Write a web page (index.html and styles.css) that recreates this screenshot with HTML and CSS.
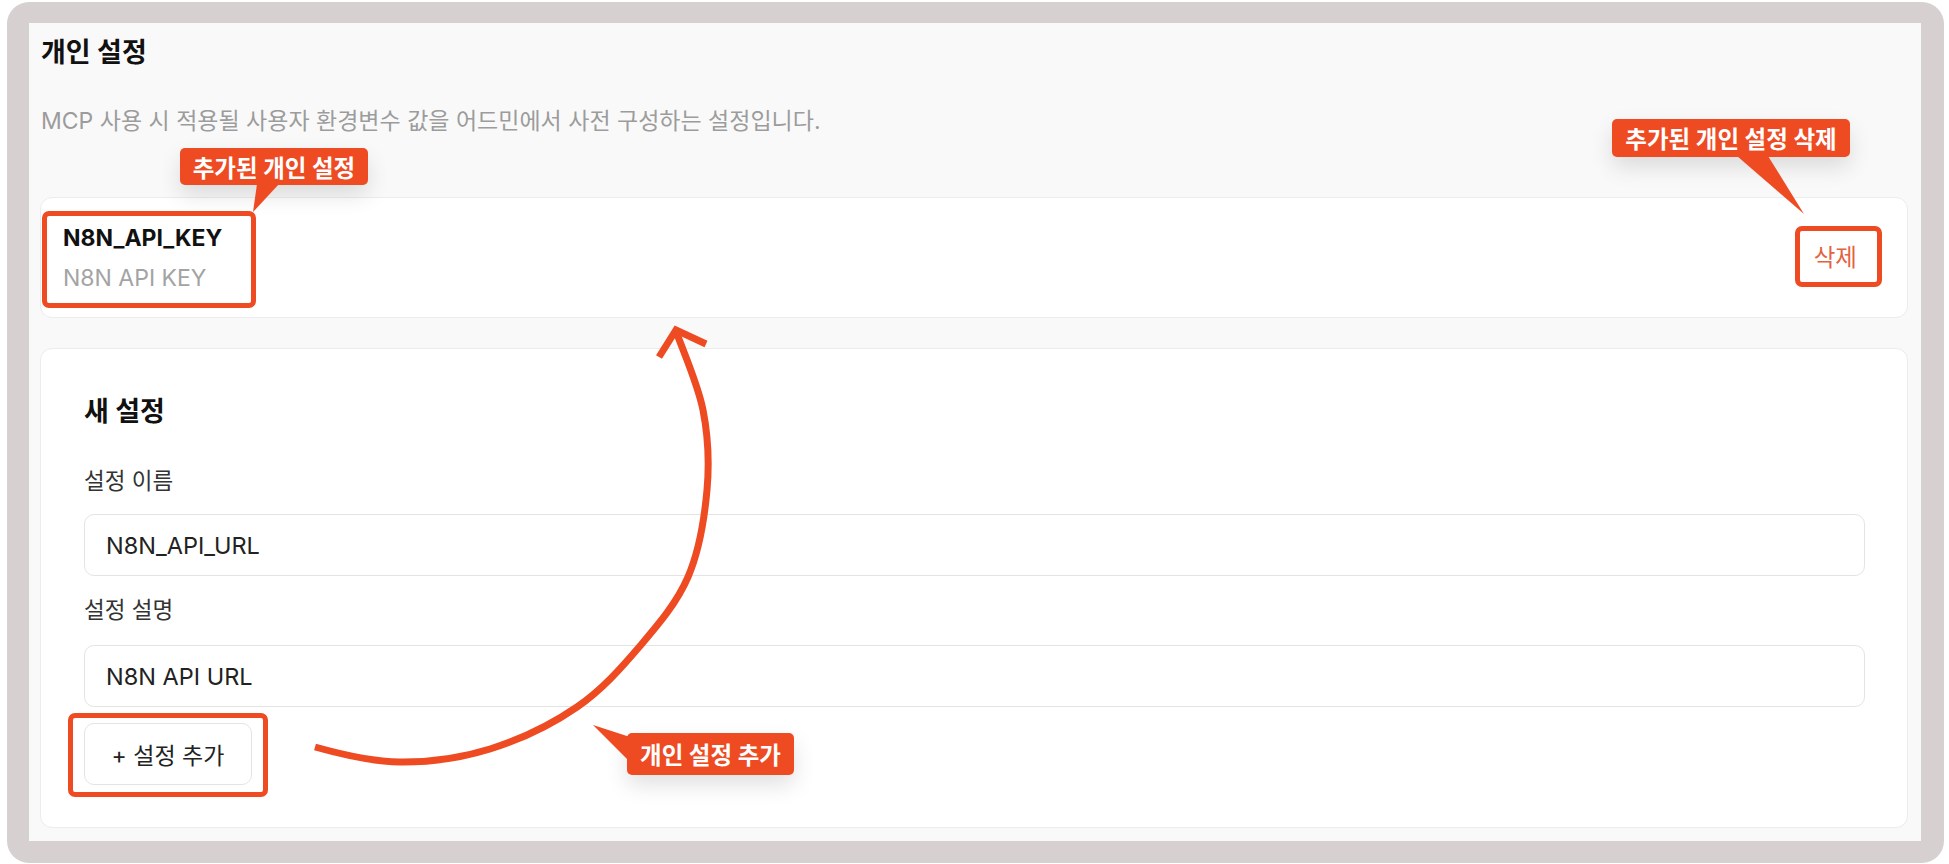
FILE: index.html
```html
<!DOCTYPE html>
<html lang="ko">
<head>
<meta charset="utf-8">
<title>개인 설정</title>
<link rel="stylesheet" href="styles.css">
</head>
<body>
<div class="frame">
  <section class="panel">
    <h2 class="panel-title">개인 설정</h2>
    <p class="panel-desc">MCP 사용 시 적용될 사용자 환경변수 값을 어드민에서 사전 구성하는 설정입니다.</p>

    <div class="card entry">
      <div class="entry-info">
        <div class="entry-name">N8N_API_KEY</div>
        <div class="entry-desc">N8N API KEY</div>
      </div>
      <button type="button" class="btn-delete">삭제</button>
    </div>

    <form class="card form">
      <h3 class="form-title">새 설정</h3>
      <label class="field-label" for="setting-name">설정 이름</label>
      <input class="field-input" id="setting-name" type="text" value="N8N_API_URL">
      <label class="field-label field-label-2" for="setting-desc">설정 설명</label>
      <input class="field-input field-input-2" id="setting-desc" type="text" value="N8N API URL">
      <button type="button" class="btn-add">+ 설정 추가</button>
    </form>
  </section>
</div>

<div class="annotations">
  <div class="callout callout-added">추가된 개인 설정</div>
  <div class="callout callout-delete">추가된 개인 설정 삭제</div>
  <div class="callout callout-add">개인 설정 추가</div>

  <div class="mark mark-entry"></div>
  <div class="mark mark-delete"></div>
  <div class="mark mark-add"></div>

  <svg class="annot-svg" width="1949" height="864" viewBox="0 0 1949 864">
    <polygon class="pointer" points="257,184 279,184 253,212"/>
    <polygon class="pointer" points="1737,156 1768,156 1804,214"/>
    <polygon class="pointer" points="593,725 630,737 630,762"/>
    <path class="arrow" d="M315,747 C340,754 370.8,761.7 400,762 C429.2,762.3 460.5,758.2 490,749 C519.5,739.8 552,724.2 577,707 C602,689.8 621.5,667.7 640,646 C658.5,624.3 676.8,603 688,577 C699.2,551 704.5,517.8 707,490 C709.5,462.2 708.2,436.5 703,410 C697.8,383.5 682.3,349.3 676,331"/>
    <polyline class="arrow-head" points="659,357 676,330 706,344"/>
  </svg>
</div>
</body>
</html>
```

FILE: styles.css
```css
html, body {
  margin: 0;
  padding: 0;
}

body {
  position: relative;
  width: 1949px;
  height: 864px;
  overflow: hidden;
  background: #ffffff;
  font-family: "Inter", "Noto Sans CJK KR", sans-serif;
  color: #111111;
}

/* outer window chrome */
.frame {
  box-sizing: border-box;
  margin: 2px 5px 0 7px;
  height: 861px;
  padding: 21px 23px 22px 22px;
  background: #d6d1d0;
  border-radius: 22px;
}

.panel {
  box-sizing: border-box;
  height: 100%;
  padding: 13px 13px 13px 11px;
  background: #f9f9f9;
}

.panel-title {
  margin: 0 0 0 1px;
  font-size: 27px;
  line-height: 34px;
  font-weight: 700;
  color: #111111;
}

.panel-desc {
  margin: 36px 0 0 1px;
  font-size: 23px;
  line-height: 30px;
  color: #9c9c9c;
}

.card {
  background: #ffffff;
  border: 1px solid #ececec;
  border-radius: 12px;
}

/* saved setting row */
.entry {
  box-sizing: border-box;
  height: 121px;
  margin-top: 61px;
  padding: 0 50px 0 22px;
  display: flex;
  align-items: center;
  justify-content: space-between;
}

.entry-info {
  display: flex;
  flex-direction: column;
  gap: 10px;
}

.entry-name {
  font-size: 23px;
  line-height: 30px;
  font-weight: 700;
  color: #111111;
}

.entry-desc {
  font-size: 23px;
  line-height: 30px;
  color: #a3a3a3;
}

.btn-delete {
  border: 0;
  padding: 0;
  background: none;
  font-family: inherit;
  font-size: 23.5px;
  line-height: 30px;
  color: #e4623f;
  cursor: pointer;
}

/* new setting form */
.form {
  box-sizing: border-box;
  margin-top: 30px;
  padding: 47px 42px 42px 43px;
}

.form-title {
  margin: 0;
  font-size: 27px;
  line-height: 32px;
  font-weight: 700;
  color: #111111;
}

.field-label {
  display: block;
  margin-top: 38px;
  font-size: 22.5px;
  line-height: 30px;
  color: #333333;
}

.field-label-2 {
  margin-top: 19px;
}

.field-input {
  display: block;
  box-sizing: border-box;
  width: 100%;
  height: 62px;
  margin-top: 18px;
  padding: 0 21px;
  border: 1px solid #e4e4e4;
  border-radius: 10px;
  background: #ffffff;
  font-family: inherit;
  font-size: 23.5px;
  color: #222222;
  outline: none;
}

.field-input-2 {
  margin-top: 20px;
}

.btn-add {
  display: block;
  box-sizing: border-box;
  width: 168px;
  height: 62px;
  margin-top: 16px;
  border: 1px solid #e4e4e4;
  border-radius: 10px;
  background: #ffffff;
  font-family: inherit;
  font-size: 23px;
  color: #222222;
  cursor: pointer;
}

/* annotation layer drawn over the page */
.annotations {
  position: absolute;
  inset: 0;
  pointer-events: none;
}

.callout {
  position: absolute;
  box-sizing: border-box;
  display: flex;
  align-items: center;
  justify-content: center;
  background: #ee4b23;
  color: #ffffff;
  font-size: 23.5px;
  font-weight: 700;
  border-radius: 5px;
  box-shadow: 0 10px 22px rgba(0, 0, 0, 0.12);
  white-space: nowrap;
}

.callout-added {
  left: 180px;
  top: 148px;
  width: 188px;
  height: 37px;
}

.callout-delete {
  left: 1612px;
  top: 119px;
  width: 238px;
  height: 38px;
}

.callout-add {
  left: 627px;
  top: 733px;
  width: 167px;
  height: 42px;
}

.mark {
  position: absolute;
  box-sizing: border-box;
  border: 5px solid #ee4b23;
  border-radius: 7px;
}

.mark-entry {
  left: 42px;
  top: 211px;
  width: 214px;
  height: 97px;
}

.mark-delete {
  left: 1795px;
  top: 226px;
  width: 87px;
  height: 61px;
}

.mark-add {
  left: 68px;
  top: 713px;
  width: 200px;
  height: 84px;
}

.annot-svg {
  position: absolute;
  left: 0;
  top: 0;
}

.pointer {
  fill: #ee4b23;
}

.arrow,
.arrow-head {
  fill: none;
  stroke: #ee4b23;
  stroke-width: 7;
}

.arrow {
  stroke-linecap: butt;
  stroke-linejoin: round;
}

.arrow-head {
  stroke-linejoin: miter;
  stroke-linecap: butt;
}
```
